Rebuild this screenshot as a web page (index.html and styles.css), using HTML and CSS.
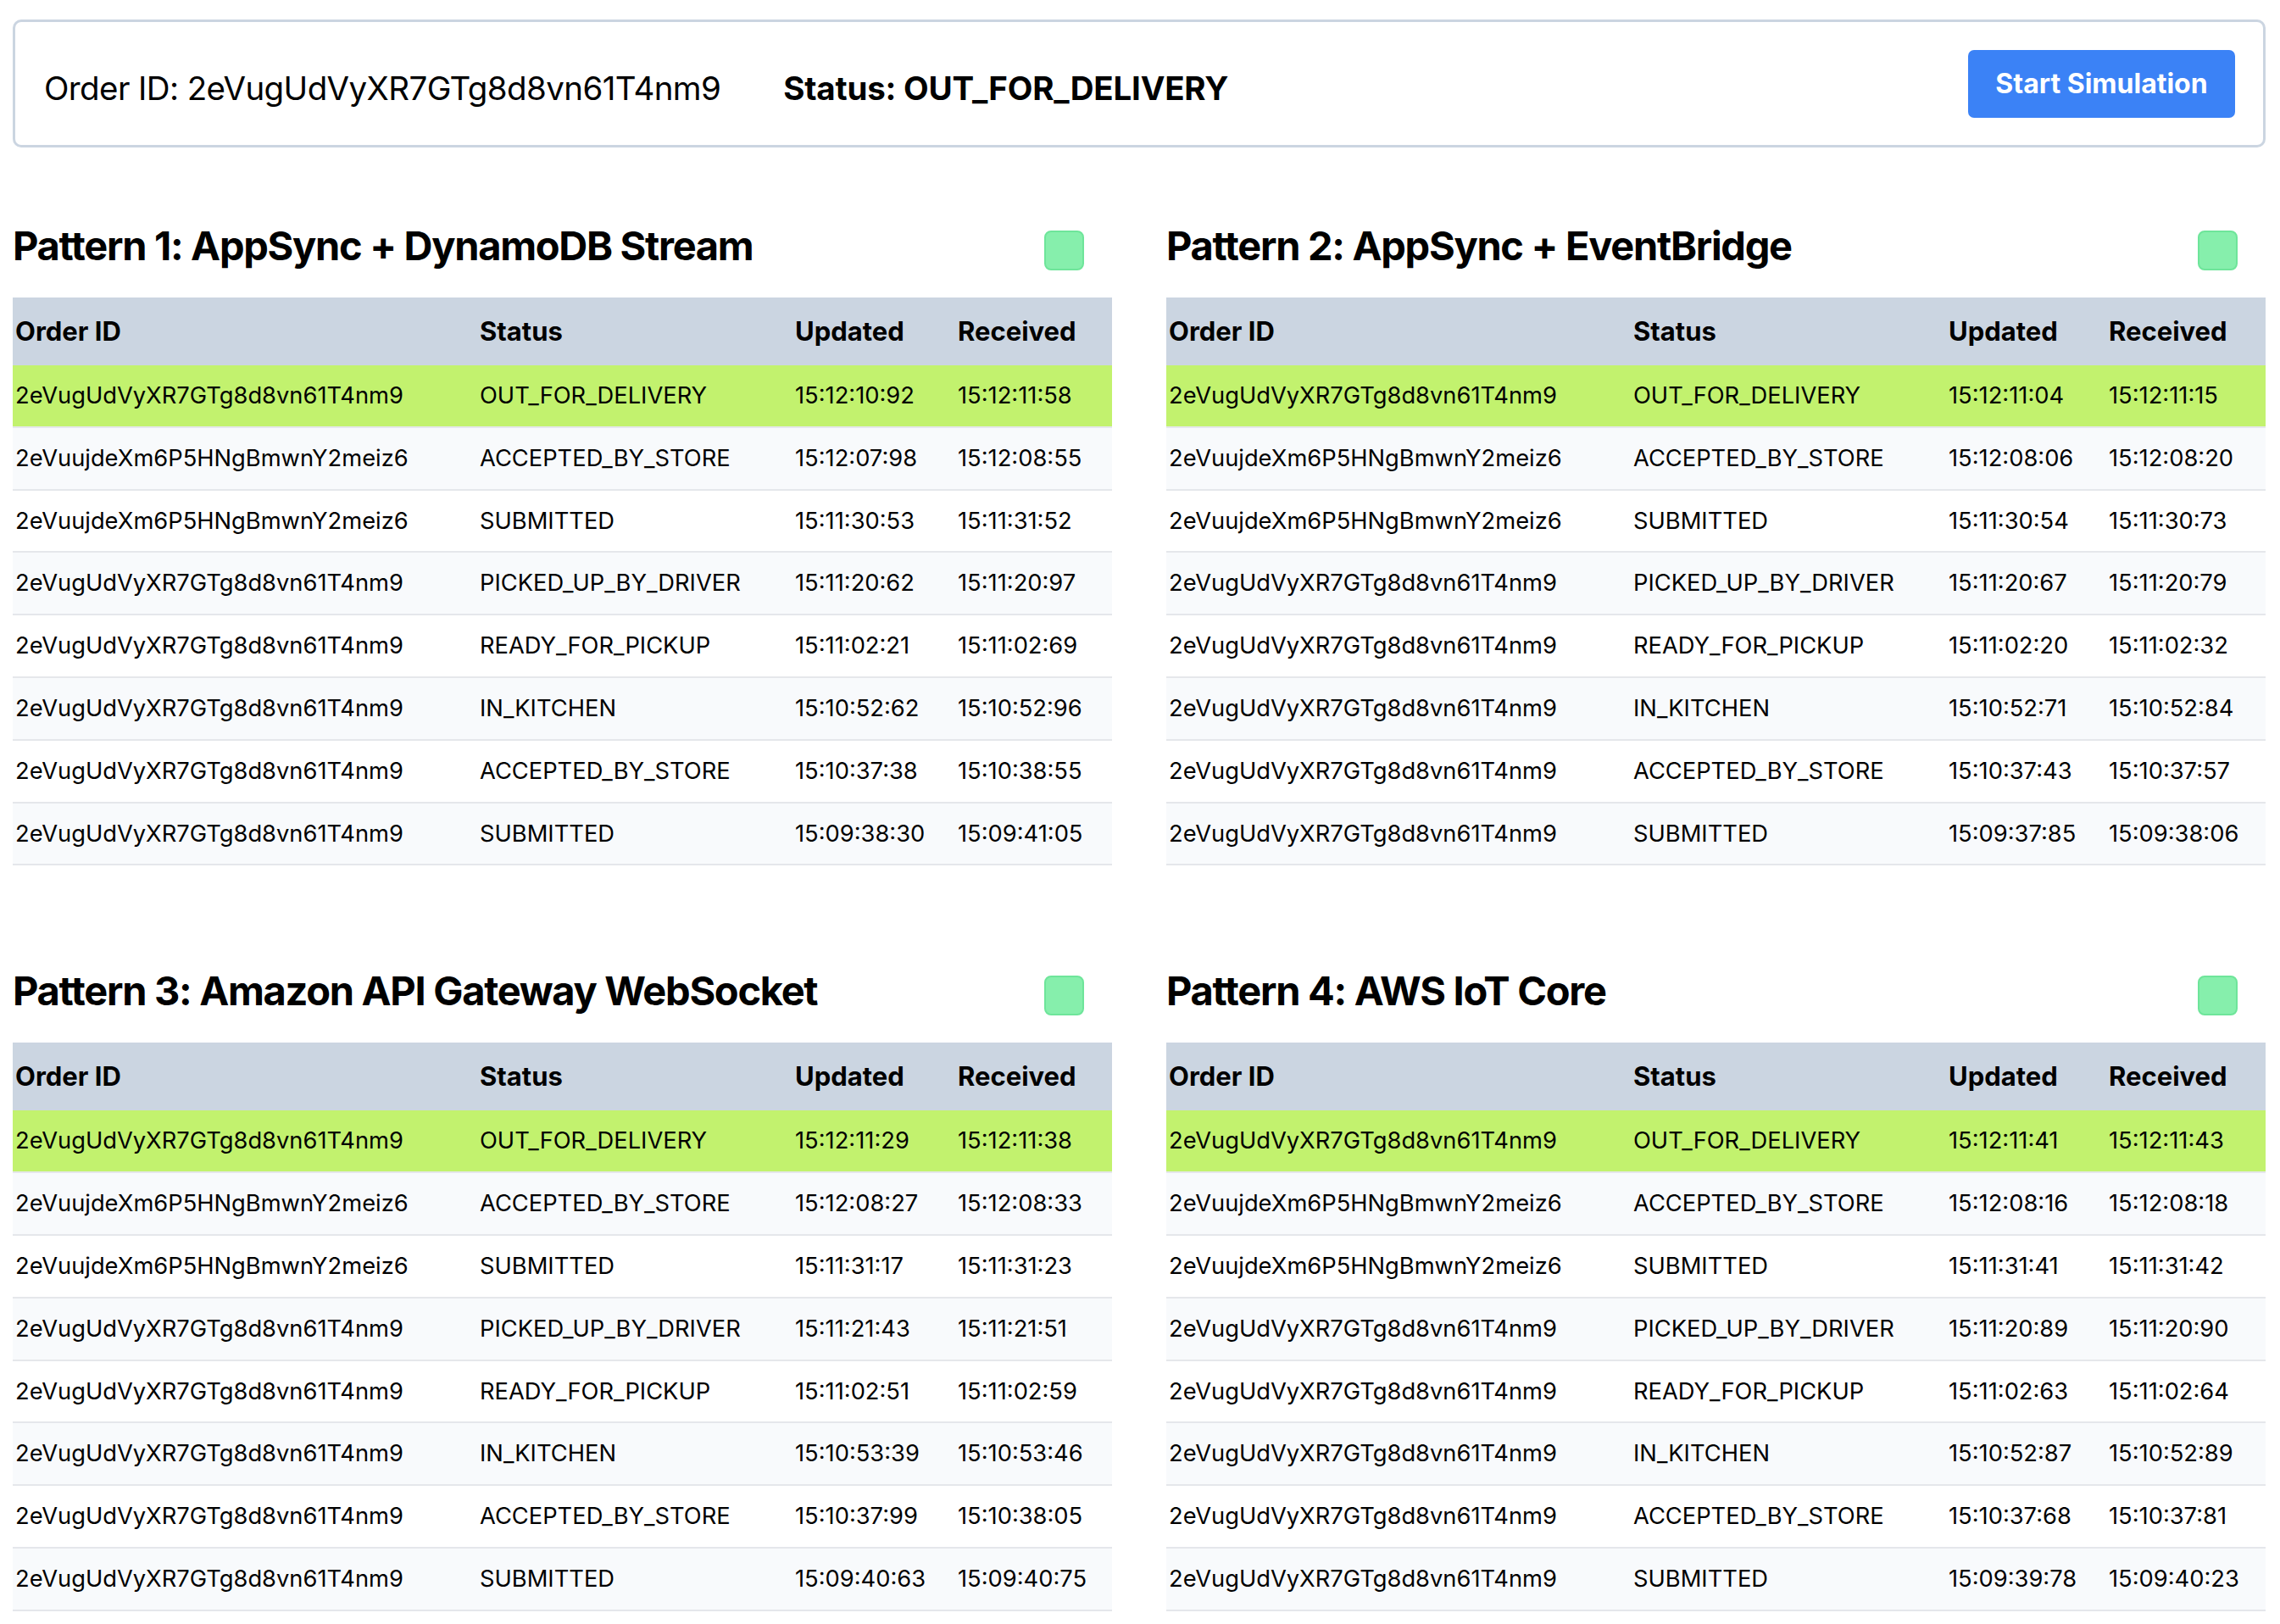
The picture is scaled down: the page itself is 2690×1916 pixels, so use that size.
FILE: index.html
```html
<!DOCTYPE html>
<html lang="en">
<head>
<meta charset="utf-8">
<title>Order Tracking Patterns</title>
<link rel="stylesheet" href="styles.css">
</head>
<body>
<div class="page">
  <header class="order-bar">
    <div class="order-info">
      <span class="order-id">Order ID: 2eVugUdVyXR7GTg8d8vn61T4nm9</span>
      <span class="order-status">Status: OUT_FOR_DELIVERY</span>
    </div>
    <button class="start-btn" type="button">Start Simulation</button>
  </header>

  <main class="patterns">
    <section class="pattern">
      <div class="pattern-head">
        <h2 class="pattern-title">Pattern 1: AppSync + DynamoDB Stream</h2>
        <span class="indicator"></span>
      </div>
      <table class="events">
        <colgroup><col class="c-id"><col class="c-status"><col class="c-upd"><col class="c-rec"></colgroup>
        <thead><tr><th>Order ID</th><th>Status</th><th>Updated</th><th>Received</th></tr></thead>
        <tbody>
          <tr class="current"><td>2eVugUdVyXR7GTg8d8vn61T4nm9</td><td>OUT_FOR_DELIVERY</td><td>15:12:10:92</td><td>15:12:11:58</td></tr>
          <tr><td>2eVuujdeXm6P5HNgBmwnY2meiz6</td><td>ACCEPTED_BY_STORE</td><td>15:12:07:98</td><td>15:12:08:55</td></tr>
          <tr><td>2eVuujdeXm6P5HNgBmwnY2meiz6</td><td>SUBMITTED</td><td>15:11:30:53</td><td>15:11:31:52</td></tr>
          <tr><td>2eVugUdVyXR7GTg8d8vn61T4nm9</td><td>PICKED_UP_BY_DRIVER</td><td>15:11:20:62</td><td>15:11:20:97</td></tr>
          <tr><td>2eVugUdVyXR7GTg8d8vn61T4nm9</td><td>READY_FOR_PICKUP</td><td>15:11:02:21</td><td>15:11:02:69</td></tr>
          <tr><td>2eVugUdVyXR7GTg8d8vn61T4nm9</td><td>IN_KITCHEN</td><td>15:10:52:62</td><td>15:10:52:96</td></tr>
          <tr><td>2eVugUdVyXR7GTg8d8vn61T4nm9</td><td>ACCEPTED_BY_STORE</td><td>15:10:37:38</td><td>15:10:38:55</td></tr>
          <tr><td>2eVugUdVyXR7GTg8d8vn61T4nm9</td><td>SUBMITTED</td><td>15:09:38:30</td><td>15:09:41:05</td></tr>
        </tbody>
      </table>
    </section>

    <section class="pattern pattern-right">
      <div class="pattern-head">
        <h2 class="pattern-title">Pattern 2: AppSync + EventBridge</h2>
        <span class="indicator"></span>
      </div>
      <table class="events">
        <colgroup><col class="c-id"><col class="c-status"><col class="c-upd"><col class="c-rec"></colgroup>
        <thead><tr><th>Order ID</th><th>Status</th><th>Updated</th><th>Received</th></tr></thead>
        <tbody>
          <tr class="current"><td>2eVugUdVyXR7GTg8d8vn61T4nm9</td><td>OUT_FOR_DELIVERY</td><td>15:12:11:04</td><td>15:12:11:15</td></tr>
          <tr><td>2eVuujdeXm6P5HNgBmwnY2meiz6</td><td>ACCEPTED_BY_STORE</td><td>15:12:08:06</td><td>15:12:08:20</td></tr>
          <tr><td>2eVuujdeXm6P5HNgBmwnY2meiz6</td><td>SUBMITTED</td><td>15:11:30:54</td><td>15:11:30:73</td></tr>
          <tr><td>2eVugUdVyXR7GTg8d8vn61T4nm9</td><td>PICKED_UP_BY_DRIVER</td><td>15:11:20:67</td><td>15:11:20:79</td></tr>
          <tr><td>2eVugUdVyXR7GTg8d8vn61T4nm9</td><td>READY_FOR_PICKUP</td><td>15:11:02:20</td><td>15:11:02:32</td></tr>
          <tr><td>2eVugUdVyXR7GTg8d8vn61T4nm9</td><td>IN_KITCHEN</td><td>15:10:52:71</td><td>15:10:52:84</td></tr>
          <tr><td>2eVugUdVyXR7GTg8d8vn61T4nm9</td><td>ACCEPTED_BY_STORE</td><td>15:10:37:43</td><td>15:10:37:57</td></tr>
          <tr><td>2eVugUdVyXR7GTg8d8vn61T4nm9</td><td>SUBMITTED</td><td>15:09:37:85</td><td>15:09:38:06</td></tr>
        </tbody>
      </table>
    </section>

    <section class="pattern">
      <div class="pattern-head">
        <h2 class="pattern-title">Pattern 3: Amazon API Gateway WebSocket</h2>
        <span class="indicator"></span>
      </div>
      <table class="events">
        <colgroup><col class="c-id"><col class="c-status"><col class="c-upd"><col class="c-rec"></colgroup>
        <thead><tr><th>Order ID</th><th>Status</th><th>Updated</th><th>Received</th></tr></thead>
        <tbody>
          <tr class="current"><td>2eVugUdVyXR7GTg8d8vn61T4nm9</td><td>OUT_FOR_DELIVERY</td><td>15:12:11:29</td><td>15:12:11:38</td></tr>
          <tr><td>2eVuujdeXm6P5HNgBmwnY2meiz6</td><td>ACCEPTED_BY_STORE</td><td>15:12:08:27</td><td>15:12:08:33</td></tr>
          <tr><td>2eVuujdeXm6P5HNgBmwnY2meiz6</td><td>SUBMITTED</td><td>15:11:31:17</td><td>15:11:31:23</td></tr>
          <tr><td>2eVugUdVyXR7GTg8d8vn61T4nm9</td><td>PICKED_UP_BY_DRIVER</td><td>15:11:21:43</td><td>15:11:21:51</td></tr>
          <tr><td>2eVugUdVyXR7GTg8d8vn61T4nm9</td><td>READY_FOR_PICKUP</td><td>15:11:02:51</td><td>15:11:02:59</td></tr>
          <tr><td>2eVugUdVyXR7GTg8d8vn61T4nm9</td><td>IN_KITCHEN</td><td>15:10:53:39</td><td>15:10:53:46</td></tr>
          <tr><td>2eVugUdVyXR7GTg8d8vn61T4nm9</td><td>ACCEPTED_BY_STORE</td><td>15:10:37:99</td><td>15:10:38:05</td></tr>
          <tr><td>2eVugUdVyXR7GTg8d8vn61T4nm9</td><td>SUBMITTED</td><td>15:09:40:63</td><td>15:09:40:75</td></tr>
        </tbody>
      </table>
    </section>

    <section class="pattern pattern-right">
      <div class="pattern-head">
        <h2 class="pattern-title">Pattern 4: AWS IoT Core</h2>
        <span class="indicator"></span>
      </div>
      <table class="events">
        <colgroup><col class="c-id"><col class="c-status"><col class="c-upd"><col class="c-rec"></colgroup>
        <thead><tr><th>Order ID</th><th>Status</th><th>Updated</th><th>Received</th></tr></thead>
        <tbody>
          <tr class="current"><td>2eVugUdVyXR7GTg8d8vn61T4nm9</td><td>OUT_FOR_DELIVERY</td><td>15:12:11:41</td><td>15:12:11:43</td></tr>
          <tr><td>2eVuujdeXm6P5HNgBmwnY2meiz6</td><td>ACCEPTED_BY_STORE</td><td>15:12:08:16</td><td>15:12:08:18</td></tr>
          <tr><td>2eVuujdeXm6P5HNgBmwnY2meiz6</td><td>SUBMITTED</td><td>15:11:31:41</td><td>15:11:31:42</td></tr>
          <tr><td>2eVugUdVyXR7GTg8d8vn61T4nm9</td><td>PICKED_UP_BY_DRIVER</td><td>15:11:20:89</td><td>15:11:20:90</td></tr>
          <tr><td>2eVugUdVyXR7GTg8d8vn61T4nm9</td><td>READY_FOR_PICKUP</td><td>15:11:02:63</td><td>15:11:02:64</td></tr>
          <tr><td>2eVugUdVyXR7GTg8d8vn61T4nm9</td><td>IN_KITCHEN</td><td>15:10:52:87</td><td>15:10:52:89</td></tr>
          <tr><td>2eVugUdVyXR7GTg8d8vn61T4nm9</td><td>ACCEPTED_BY_STORE</td><td>15:10:37:68</td><td>15:10:37:81</td></tr>
          <tr><td>2eVugUdVyXR7GTg8d8vn61T4nm9</td><td>SUBMITTED</td><td>15:09:39:78</td><td>15:09:40:23</td></tr>
        </tbody>
      </table>
    </section>
  </main>
</div>
</body>
</html>
```

FILE: styles.css
```css
* { box-sizing: border-box; }

body {
  margin: 0;
  background: #ffffff;
  color: #000000;
  font-family: Inter, "Noto Sans", "Liberation Sans", sans-serif;
}

.page {
  padding: 23px 17px 0 15px;
}

/* ---------- top order bar ---------- */
.order-bar {
  display: flex;
  align-items: center;
  justify-content: space-between;
  height: 151px;
  padding: 0 33px 0 34px;
  border: 3px solid #cbd5e1;
  border-radius: 10px;
}

.order-info {
  display: flex;
  align-items: center;
  gap: 74px;
  margin-top: 11px;
  font-size: 38.5px;
  line-height: 56px;
}

.order-id {
  letter-spacing: -0.6px;
}

.order-status {
  font-weight: 700;
  letter-spacing: -0.2px;
}

.start-btn {
  width: 315px;
  height: 80px;
  border: 0;
  border-radius: 7px;
  background: #3b82f6;
  color: #ffffff;
  font-family: inherit;
  font-size: 32px;
  font-weight: 700;
}

/* ---------- pattern grid ---------- */
.patterns {
  display: grid;
  grid-template-columns: 1fr 1fr;
  column-gap: 64px;
  row-gap: 117px;
  margin-top: 85px;
}

.pattern-head {
  display: flex;
  align-items: flex-start;
  justify-content: space-between;
  margin-bottom: 30px;
}

.pattern-title {
  margin: 0;
  font-size: 47px;
  line-height: 62px;
  font-weight: 700;
  letter-spacing: -1.3px;
}

.indicator {
  width: 47px;
  height: 47px;
  margin-top: 13px;
  margin-right: 33px;
  border: 2px solid #6ee59a;
  border-radius: 8px;
  background: #86efac;
}

/* ---------- tables ---------- */
.events {
  width: 100%;
  border-collapse: collapse;
  table-layout: fixed;
}

.c-id { width: 548px; }
.c-status { width: 372px; }
.c-upd { width: 192px; }

.pattern-right .c-upd { width: 189px; }

.events th {
  padding: 20px 3px;
  background: #cbd5e1;
  text-align: left;
  font-size: 31px;
  line-height: 40px;
  font-weight: 700;
}

.events td {
  padding: 16px 3px;
  font-size: 27.3px;
  line-height: 39.8px;
  border-bottom: 2px solid #e5e7eb;
  white-space: nowrap;
}

.events tbody tr:nth-child(even) td {
  background: #f8fafc;
}

.events tbody tr.current td {
  background: #c2f26e;
}
```
